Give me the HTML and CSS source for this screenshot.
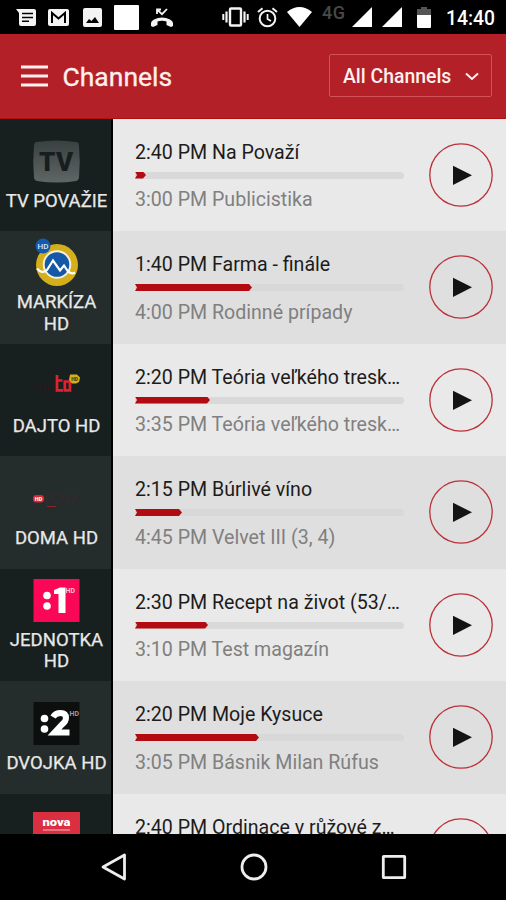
FILE: index.html
```html
<!DOCTYPE html>
<html lang="en">
<head>
<meta charset="utf-8">
<title>Channels</title>
<link rel="stylesheet" href="styles.css">
</head>
<body>
<div class="screen">
  <div class="status">
    <div class="notifications">
      <svg width="20" height="17" viewBox="0 0 20 17"><path fill="#f4f4f4" d="M0 0H18Q20 0 20 2V15Q20 17 18 17H5Q3 17 3 15V4Z"/><path d="M6 4.5H17M6 8.5H17M6 12.3H13" stroke="#000" stroke-width="1.6"/></svg>
      <svg width="21" height="17" viewBox="0 0 21 17"><rect width="21" height="17" rx="2" fill="#f4f4f4"/><path d="M4 14V4L10.5 9.5L17 4V14" fill="none" stroke="#000" stroke-width="2"/></svg>
      <svg width="19" height="19" viewBox="0 0 19 19"><rect width="19" height="19" rx="2" fill="#f4f4f4"/><path d="M3 15L6 11L8.500 13L12 9L16 15Z" fill="#000"/></svg>
      <svg width="25" height="25" viewBox="0 0 25 25"><rect width="25" height="25" rx="1" fill="#fff"/></svg>
      <svg width="22" height="19" viewBox="0 0 22 19"><path d="M6 6V1.500H10M6.200 1.700L11 6.200L16 1" fill="none" stroke="#f4f4f4" stroke-width="1.8"/><path d="M0 15Q0 13 3 11.500Q11 7.500 19 11.500Q22 13 22 15V18L20 19L15.500 17V13.500Q11 12 6.500 13.500V17L2 19L0 18Z" fill="#f4f4f4"/></svg>
    </div>
    <div class="system">
      <svg width="27" height="20" viewBox="0 0 27 20"><rect x="8" y="1.500" width="11" height="17" rx="1" fill="none" stroke="#f4f4f4" stroke-width="2.400"/><path d="M4.500 4.500V15.500M22.500 4.500V15.500" stroke="#f4f4f4" stroke-width="2.200"/><path d="M1.300 7V13M25.700 7V13" stroke="#f4f4f4" stroke-width="2"/></svg>
      <svg class="alarm" width="21" height="21" viewBox="0 0 21 21"><circle cx="10.500" cy="11.500" r="7.800" fill="none" stroke="#f4f4f4" stroke-width="2"/><path d="M1 5L5.500 1.200M20 5L15.500 1.200" stroke="#f4f4f4" stroke-width="2"/><path d="M10.500 7V12L14 14" fill="none" stroke="#f4f4f4" stroke-width="1.700"/></svg>
      <svg class="wifi" width="25" height="20" viewBox="0 0 25 20"><path fill="#fff" d="M0 5Q12.500 -5 25 5L12.500 20Z"/></svg>
      <span class="network">4G</span>
      <svg class="signal" width="20" height="20" viewBox="0 0 20 20"><path fill="#fff" d="M0 20H20V0Z"/></svg>
      <svg class="signal-two" width="20" height="20" viewBox="0 0 20 20"><path fill="#fff" d="M0 20H20V0Z"/></svg>
      <svg class="battery" width="14" height="21" viewBox="0 0 14 21"><path fill="#555" d="M0 2H4V0H10V2H14V8H0Z"/><path fill="#fff" d="M0 8H14V20Q14 21 13 21H1Q0 21 0 20Z"/></svg>
      <span class="clock">14:40</span>
    </div>
  </div>

  <header class="header">
    <svg class="menu" width="27" height="22" viewBox="0 0 27 22"><path d="M0 2H27M0 11H27M0 20H27" stroke="#fff0ee" stroke-width="3.200"/></svg>
    <h1>Channels</h1>
    <div class="filter"><span>All Channels</span><svg width="14" height="9" viewBox="0 0 14 9"><path d="M1 1.500L7 7L13 1.500" fill="none" stroke="#fff0ee" stroke-width="2"/></svg></div>
  </header>

  <main class="list">
    <section class="row">
      <div class="channel">
        <svg class="logo" viewBox="0 0 47 43"><defs><linearGradient id="tv" x2="0" y2="1"><stop stop-color="#384040"/><stop offset="1" stop-color="#606664"/></linearGradient></defs><path d="M4 2Q23.500 -1 43 2Q46 2 46 6Q47.500 22 46 37Q46 40 43 41Q23.500 44 4 41Q1 40 1 37Q-.5 22 1 6Q1 2 4 2Z" fill="url(#tv)"/><text class="tv-mark" x="6" y="31">T</text><text class="tv-mark" x="23" y="31">V</text></svg>
        <div class="name">TV POVAŽIE</div>
      </div>
      <div class="programme"><p class="now">2:40 PM Na Považí</p><div class="track"><div class="bar" style="width:11px"></div></div><p class="next">3:00 PM Publicistika</p></div>
      <div class="play"><svg viewBox="0 0 64 64"><circle cx="32" cy="32" r="31.200"/><path d="M24 22.800L43 32.300L24 42Z"/></svg></div>
    </section>
    <section class="row alt">
      <div class="channel">
        <svg class="logo" viewBox="0 0 47 43"><circle cx="24" cy="24" r="21" fill="#d4ae1b"/><circle cx="24" cy="23.500" r="13.300" fill="#1458a8" stroke="#f5f1dc" stroke-width="2"/><path d="M4 27.500Q9 33.500 14 29L20 19.500L27 29.500L31 24.500L35 30.500Q39 33.500 42 31.500" fill="none" stroke="#fff" stroke-width="2.200"/><circle cx="10" cy="5" r="7.500" fill="#1359ad"/><text class="hd-mark" x="10" y="8" text-anchor="middle">HD</text></svg>
        <div class="name">MARKÍZA<br>HD</div>
      </div>
      <div class="programme"><p class="now">1:40 PM Farma - finále</p><div class="track"><div class="bar" style="width:117px"></div></div><p class="next">4:00 PM Rodinné prípady</p></div>
      <div class="play"><svg viewBox="0 0 64 64"><circle cx="32" cy="32" r="31.200"/><path d="M24 22.800L43 32.300L24 42Z"/></svg></div>
    </section>
    <section class="row">
      <div class="channel">
        <svg class="logo" viewBox="0 0 47 43"><text class="daj-mark" x="1" y="26">daj</text><path d="M24 10V25.300H30M23 15.500H29.500M31.800 16.500H37V25.300H31.800Z" fill="none" stroke="#e3202e" stroke-width="2.700"/><path d="M37 9.500H44L47 12.500L46 17L43 18.500H39L36 15Z" fill="#d5ae1e"/><text class="dajto-hd" x="41.500" y="16.200" text-anchor="middle">HD</text></svg>
        <div class="name">DAJTO HD</div>
      </div>
      <div class="programme"><p class="now">2:20 PM Teória veľkého tresk…</p><div class="track"><div class="bar" style="width:75px"></div></div><p class="next">3:35 PM Teória veľkého tresk…</p></div>
      <div class="play"><svg viewBox="0 0 64 64"><circle cx="32" cy="32" r="31.200"/><path d="M24 22.800L43 32.300L24 42Z"/></svg></div>
    </section>
    <section class="row alt">
      <div class="channel">
        <svg class="logo" viewBox="0 0 47 43"><text class="doma-mark" x="11.500" y="27" textLength="34" lengthAdjust="spacingAndGlyphs">DOMA</text><rect y="18" width="11" height="7.500" rx="3" fill="#dc252c"/><text class="doma-hd" x="5.500" y="23.700" text-anchor="middle">HD</text><path d="M14 29.500H23" stroke="#84272b"/></svg>
        <div class="name">DOMA HD</div>
      </div>
      <div class="programme"><p class="now">2:15 PM Búrlivé víno</p><div class="track"><div class="bar" style="width:47px"></div></div><p class="next">4:45 PM Velvet III (3, 4)</p></div>
      <div class="play"><svg viewBox="0 0 64 64"><circle cx="32" cy="32" r="31.200"/><path d="M24 22.800L43 32.300L24 42Z"/></svg></div>
    </section>
    <section class="row">
      <div class="channel">
        <svg class="logo" viewBox="0 0 47 43"><rect x=".5" width="46" height="43" fill="#fa0758"/><circle cx="14" cy="16.500" r="3.800" fill="#fff"/><circle cx="14" cy="27" r="3.800" fill="#fff"/><path d="M21 11L27 8.500H32.500V34H25.500V15H21Z" fill="#fff"/><text class="rtvs-hd" x="32.500" y="14">HD</text></svg>
        <div class="name">JEDNOTKA<br>HD</div>
      </div>
      <div class="programme"><p class="now">2:30 PM Recept na život (53/…</p><div class="track"><div class="bar" style="width:73px"></div></div><p class="next">3:10 PM Test magazín</p></div>
      <div class="play"><svg viewBox="0 0 64 64"><circle cx="32" cy="32" r="31.200"/><path d="M24 22.800L43 32.300L24 42Z"/></svg></div>
    </section>
    <section class="row alt">
      <div class="channel">
        <svg class="logo" viewBox="0 0 47 43"><rect x=".5" width="46" height="43" fill="#0d0f0f"/><circle cx="11.500" cy="16.500" r="3.800" fill="#fff"/><circle cx="11.500" cy="27" r="3.800" fill="#fff"/><path d="M20 15Q22.500 11 27.500 11Q33 11 33 16Q33 19.500 29 22.500L21.500 30.500H36.500" fill="none" stroke="#fff" stroke-width="6"/><text class="rtvs-hd grey" x="36.500" y="13.500">HD</text></svg>
        <div class="name">DVOJKA HD</div>
      </div>
      <div class="programme"><p class="now">2:20 PM Moje Kysuce</p><div class="track"><div class="bar" style="width:124px"></div></div><p class="next">3:05 PM Básnik Milan Rúfus</p></div>
      <div class="play"><svg viewBox="0 0 64 64"><circle cx="32" cy="32" r="31.200"/><path d="M24 22.800L43 32.300L24 42Z"/></svg></div>
    </section>
    <section class="row">
      <div class="channel clipped">
        <svg class="logo" viewBox="0 0 47 43"><rect width="47" height="43" fill="#d92f40"/><text class="nova-mark" x="23.500" y="14" text-anchor="middle" textLength="28" lengthAdjust="spacingAndGlyphs">nova</text><path d="M10 18H37" stroke="#ec8a92" stroke-width="1.500"/></svg>
      </div>
      <div class="programme"><p class="now">2:40 PM Ordinace v růžové z…</p></div>
      <div class="play"><svg viewBox="0 0 64 64"><circle cx="32" cy="32" r="31.200"/></svg></div>
    </section>
  </main>

  <nav class="nav">
    <svg width="26" height="28" viewBox="0 0 26 28"><path d="M2 14L23.500 2V26Z" fill="none" stroke="#eee" stroke-width="2.800" stroke-linejoin="round"/></svg>
    <svg width="28" height="28" viewBox="0 0 28 28"><circle cx="14" cy="14" r="12" fill="none" stroke="#eee" stroke-width="2.800"/></svg>
    <svg width="26" height="26" viewBox="0 0 26 26"><rect x="2.300" y="2.300" width="21.400" height="21.400" rx=".5" fill="none" stroke="#eee" stroke-width="2.800"/></svg>
  </nav>
</div>
</body>
</html>
```
FILE: styles.css
```css
* { box-sizing: border-box; }
body { margin: 0; background: #000; font-family: Roboto, "Liberation Sans", sans-serif; }
h1, p { margin: 0; font-weight: 400; }
svg { display: block; flex: none; overflow: visible; }
.screen { width: 506px; height: 900px; display: flex; flex-direction: column; overflow: hidden; }

.status { height: 34px; flex: none; display: flex; justify-content: space-between; padding: 0 11px 0 16px; color: #fff; }
.notifications, .system { display: flex; align-items: center; }
.notifications { gap: 12px; }
.notifications svg:nth-child(3) { margin-left: 2px; }
.system svg:first-child { margin-right: 8px; }
.alarm { margin-right: 9px; }
.wifi { margin-right: 10px; }
.network { width: 30px; font-size: 18px; font-weight: 500; line-height: 20px; color: #484848; padding-bottom: 8px; letter-spacing: .5px; }
.signal { margin-right: 10px; }
.signal-two { margin-right: 15px; }
.battery { margin-right: 15px; }
.clock { width: 49px; padding-top: 2px; font-size: 19.300px; font-weight: 500; white-space: nowrap; }

.header { height: 84.500px; flex: none; display: flex; align-items: center; background: #b32028; border-bottom: 1.500px solid #b0100f; padding: 0 14px 0 21px; color: #fff0ee; }
.menu { margin-right: 14.500px; }
.header h1 { font-size: 26.500px; line-height: 32px; padding-top: 3px; -webkit-text-stroke: .3px #fff0ee; }
.filter { margin-left: auto; width: 163px; height: 43px; display: flex; align-items: center; justify-content: space-between; padding: 2px 12px 0 13px; border: 1px solid #d2525a; border-radius: 2px; font-size: 19.400px; font-weight: 500; white-space: nowrap; }

.list { flex: 1; min-height: 0; overflow: hidden; }
.row { height: 112.500px; display: flex; background: #e9e9e9; }
.row.alt { background: #dfdfdf; }
.channel { width: 113px; flex: none; display: flex; flex-direction: column; align-items: center; justify-content: center; padding: 2px 0 0 2px; background: #17201e; border-right: 2px solid #000; color: #e8e8e8; }
.alt .channel { background: #242d2c; }
.channel.clipped { justify-content: flex-start; padding-top: 18px; }
.logo { width: 47px; height: 43px; }
.name { margin-top: 8px; font-size: 18.500px; line-height: 21.500px; text-align: center; white-space: nowrap; -webkit-text-stroke: .25px #e8e8e8; }
.programme { width: 269px; margin-left: 22px; flex: none; padding-top: 20px; }
.now, .next { font-size: 19.600px; line-height: 27px; white-space: nowrap; }
.now { color: #1c1c1c; }
.next { color: #808080; }
.track { height: 7px; margin: 6px 0 7.500px; border-radius: 0 4px 4px 0; background: #d9d9d9; }
.alt .track { background: #d8d8d8; }
.bar { height: 7px; background: #b20c12; clip-path: polygon(0 0, calc(100% - 3px) 0, 100% 50%, calc(100% - 3px) 100%, 0 100%, 2px 50%); }
.play { margin: 24px 0 0 25px; width: 64px; height: 64px; }
.play circle { fill: none; stroke: #bc3039; stroke-width: 1.300; }
.play path { fill: #141414; }

.tv-mark { font: 900 26px Roboto, sans-serif; fill: #171e1d; }
.hd-mark { font: 500 8px Roboto, sans-serif; fill: #d7e7ff; }
.daj-mark { font: 900 15px Roboto, sans-serif; fill: #211d1e; }
.dajto-hd { font: 900 5px Roboto, sans-serif; fill: #4a3a12; }
.doma-mark { font: 400 15px Roboto, sans-serif; fill: #35292c; }
.doma-hd { font: 900 5.500px Roboto, sans-serif; fill: #fff; }
.rtvs-hd { font: 700 7px Roboto, sans-serif; fill: #ffc0d6; }
.rtvs-hd.grey { fill: #9b9b9b; }
.nova-mark { font: 900 11px Roboto, sans-serif; fill: #fff; }

.nav { height: 66.500px; flex: none; display: flex; align-items: center; justify-content: space-between; padding: 0 99px 0 101px; background: #000; }
```
